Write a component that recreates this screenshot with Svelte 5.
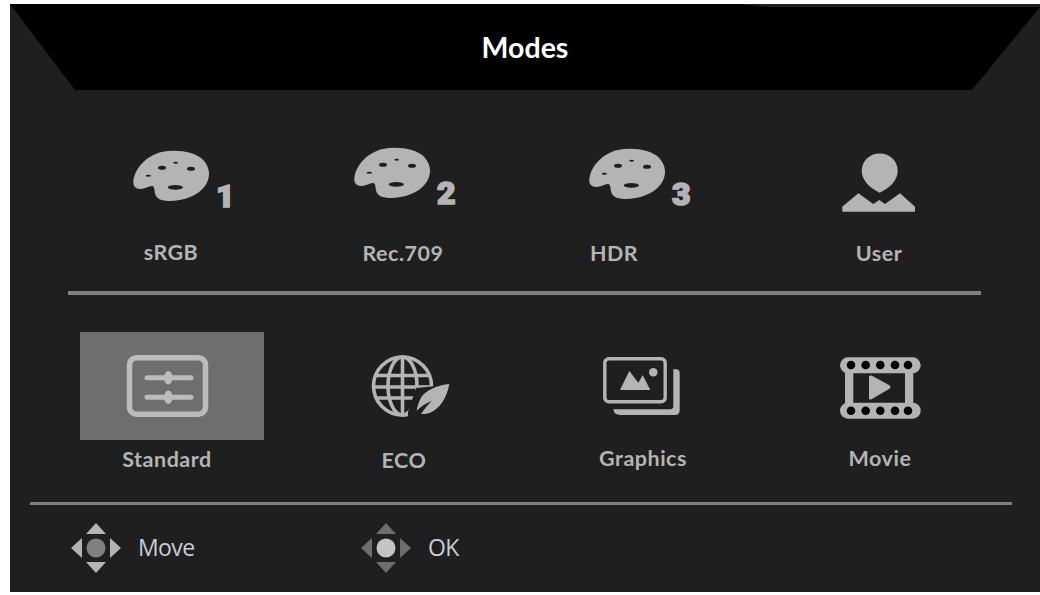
<script>
	const presets = [
		{ label: 'sRGB', digit: '1', dy: 9, shift: 18 },
		{ label: 'Rec.709', digit: '2', dy: 0, shift: -4 },
		{ label: 'HDR', digit: '3', dy: 3, shift: 44 }
	];
</script>

{#snippet dpad(active)}
	<svg class="dpad {active}" width="50" height="50" viewBox="0 0 50 50">
		<polygon class="arrow" points="25,0 15,11 35,11" />
		<polygon class="arrow" points="15,39 35,39 25,50" />
		<polygon class="arrow" points="11,15 11,35 0,25" />
		<polygon class="arrow" points="39,15 39,35 50,25" />
		<circle class="knob" cx="25" cy="25" r="9.5" />
	</svg>
{/snippet}

<main class="osd">
	<header class="title-bar">
		<h1>Modes</h1>
	</header>

	<section class="row presets">
		{#each presets as p}
			<div class="item">
				<svg class="icon" style:margin-left="{Math.max(p.shift, 0)}px" style:margin-right="{Math.max(-p.shift, 0)}px" width="120" height="83" viewBox="0 0 360 249">
					<g transform="translate(0 {p.dy})">
						<path
							fill-rule="evenodd"
							d="M40 125C42 90 75 48 125 36C170 27 225 35 250 60C272 85 272 115 255 138C232 170 185 184 145 183C120 182 108 175 105 160C103 150 104 142 98 138C88 136 75 148 60 147C47 146 39 138 40 125Z"
						/>
						<ellipse class="hole" cx="126" cy="83" rx="12" ry="6" />
						<ellipse class="hole" cx="167" cy="68" rx="7" ry="3" />
						<ellipse class="hole" cx="213" cy="86" rx="12" ry="6" />
						<ellipse class="hole" cx="85" cy="107" rx="8" ry="3" />
						<ellipse class="hole" cx="166" cy="142" rx="23" ry="7" />
						<text class="digit" x="288" y="200">{p.digit}</text>
					</g>
				</svg>
				<span class="label">{p.label}</span>
			</div>
		{/each}
		<div class="item">
			<svg class="icon" width="120" height="83" viewBox="819 137 120 83">
				<path d="M879.7 153.5C890 153.5 897.7 161 897.7 171C897.7 180 890 188 879.7 192.7C869.5 188 861.7 180 861.7 171C861.7 161 869.5 153.5 879.7 153.5Z" />
				<path d="M842.3 211.7V206.7L858.3 193.3L873.3 204L879.3 200L885 204L900 193.3L915 206.7V211.7Z" />
			</svg>
			<span class="label">User</span>
		</div>
	</section>

	<div class="rule short"></div>

	<section class="row scenes">
		<div class="item">
			<div class="tile active">
				<svg class="icon" width="96" height="90" viewBox="120 345 96 90">
					<rect class="line thick" x="129.5" y="357.7" width="76" height="56.5" rx="7" />
					<path class="line slider" d="M147 377.7H191M147 397.3H191" />
					<ellipse cx="168.3" cy="377.7" rx="4.3" ry="6.8" />
					<ellipse cx="168.3" cy="397.3" rx="4.3" ry="6.8" />
				</svg>
			</div>
			<span class="label low">Standard</span>
		</div>
		<div class="item">
			<div class="tile">
				<svg class="icon eco" width="100" height="90" viewBox="360 345 100 90">
					<g class="wire">
						<circle cx="402.5" cy="386" r="29" />
						<ellipse cx="402.5" cy="386" rx="14.5" ry="29" />
						<path d="M402.5 356.7V415.3M376 375.5H429M373.5 387H432M376 398H429" />
					</g>
					<path class="cut" d="M436 386L416 388L408 412L408 425H460V380Z" />
					<path d="M449.3 384C438.3 385 425 390 420.7 398.3C418.3 403 417 408 416.7 410.7C419.3 408.3 425 403.3 431.7 401C428.3 404.3 425 408.3 421 414C431.7 415 445 406.7 449.3 384Z" />
				</svg>
			</div>
			<span class="label lower">ECO</span>
		</div>
		<div class="item">
			<div class="tile">
				<svg class="icon graphics" width="100" height="90" viewBox="590 345 100 90">
					<rect class="line" x="604.8" y="358.8" width="60.4" height="43" rx="4" />
					<path d="M673.3 369.3H676Q679.7 369.3 679.7 373V410Q679.7 415 675 415H620Q614 415 613.3 409.3H670Q673.3 409.3 673.3 406Z" />
					<polygon points="620,390 629.3,371 638.3,382.7 642.7,375 650.3,390" />
					<circle cx="653.3" cy="372.3" r="4.3" />
				</svg>
			</div>
			<span class="label">Graphics</span>
		</div>
		<div class="item">
			<div class="tile">
				<svg class="icon" width="100" height="90" viewBox="830 345 100 90">
					<rect x="840" y="357.3" width="80.7" height="16" rx="8" />
					<rect x="840" y="402.7" width="80.7" height="16" rx="8" />
					<rect x="845" y="370" width="8.3" height="36" />
					<rect x="905" y="370" width="8.3" height="36" />
					{#each [851, 865.7, 880.3, 895, 908] as cx}
						<circle class="perf" {cx} cy="365" r="4.3" />
						<circle class="perf" {cx} cy="410.7" r="4.3" />
					{/each}
					<path d="M869 377C869 375.5 870.5 375 872 375.7L889 385C891 386 891 388 889 389L872 399C870.5 400 869 399.5 869 398Z" />
				</svg>
			</div>
			<span class="label">Movie</span>
		</div>
	</section>

	<div class="rule"></div>

	<footer class="hints">
		<div class="hint">
			{@render dpad('move')}
			<span>Move</span>
		</div>
		<div class="hint">
			{@render dpad('ok')}
			<span>OK</span>
		</div>
	</footer>
</main>

<style>
	:global(body) {
		background: #fff;
		overflow: hidden;
	}

	.osd {
		margin: 4px 0 0 10px;
		width: 1030px;
		height: 588px;
		background: #201f20;
		font-family: Lato, 'Liberation Sans', sans-serif;
		overflow: hidden;
	}

	.title-bar {
		height: 86px;
		display: flex;
		align-items: center;
		justify-content: center;
		background: #000;
		clip-path: polygon(0 0, 730px 0, 760px 3px, 100% 3px, 962px 100%, 65px 100%);
	}

	h1 {
		margin: 0;
		font-size: 28.5px;
		font-weight: 700;
		color: #fff;
	}

	.row {
		display: grid;
		padding-left: 20px;
		box-sizing: border-box;
	}

	.presets {
		grid-template-columns: 282px 182px 240px 290px;
		height: 201px;
		padding-top: 47px;
	}

	.scenes {
		grid-template-columns: 274px 200px 278px 196px;
		height: 206.5px;
		padding-top: 37px;
	}

	.item {
		display: flex;
		flex-direction: column;
		align-items: center;
	}

	.icon {
		display: block;
		fill: #b4b4b4;
	}

	.hole {
		fill: #201f20;
	}

	.digit {
		font-family: Roboto, 'Liberation Sans', sans-serif;
		font-size: 96px;
		font-weight: 900;
		stroke: #b4b4b4;
		stroke-width: 5px;
	}

	.label {
		font-size: 21.5px;
		letter-spacing: 0.5px;
		line-height: 26px;
		font-weight: 700;
		color: #b4b4b4;
	}

	.presets .label {
		margin-top: 20px;
	}

	.presets .item:first-child .label {
		margin-top: 19px;
	}

	.label.low {
		margin-top: 1px;
	}

	.label.lower {
		margin-top: 2px;
	}

	.tile {
		display: flex;
		justify-content: center;
		width: 184px;
		height: 108px;
		padding-top: 13px;
		box-sizing: border-box;
		margin-bottom: 5px;
	}

	.tile.active {
		background: #6e6e6e;
		margin-left: 10px;
		padding-right: 8px;
	}

	.tile.active .icon {
		fill: #bcbcbc;
	}

	.eco {
		margin-left: 12px;
	}

	.graphics {
		margin-right: 6px;
	}

	.line {
		fill: none;
		stroke: #b4b4b4;
		stroke-width: 3.4px;
		stroke-linecap: round;
	}

	.active .line {
		stroke: #bcbcbc;
	}

	.line.thick {
		stroke-width: 5.5px;
	}

	.line.slider {
		stroke-width: 5px;
	}

	.wire {
		fill: none;
		stroke: #b4b4b4;
		stroke-width: 3.6px;
	}

	.cut {
		fill: #201f20;
	}

	.perf {
		fill: #000;
	}

	.rule {
		height: 3.5px;
		margin-left: 20px;
		width: 982px;
		background: #808080;
	}

	.rule.short {
		height: 4px;
		margin-left: 58px;
		width: 913px;
	}

	.hints {
		display: flex;
		padding: 18px 0 0 61px;
	}

	.hint {
		display: flex;
		align-items: center;
		gap: 17px;
		width: 290px;
		font-family: 'Open Sans', sans-serif;
		font-size: 23px;
		letter-spacing: -0.6px;
		color: #c8cdd2;
	}

	.hint span {
		margin-bottom: 2px;
	}

	.dpad.move .arrow {
		fill: #b4b4b4;
	}

	.dpad.move .knob {
		fill: #808080;
	}

	.dpad.ok .arrow {
		fill: #6e6e6e;
	}

	.dpad.ok .knob {
		fill: #c4c4c4;
	}
</style>
